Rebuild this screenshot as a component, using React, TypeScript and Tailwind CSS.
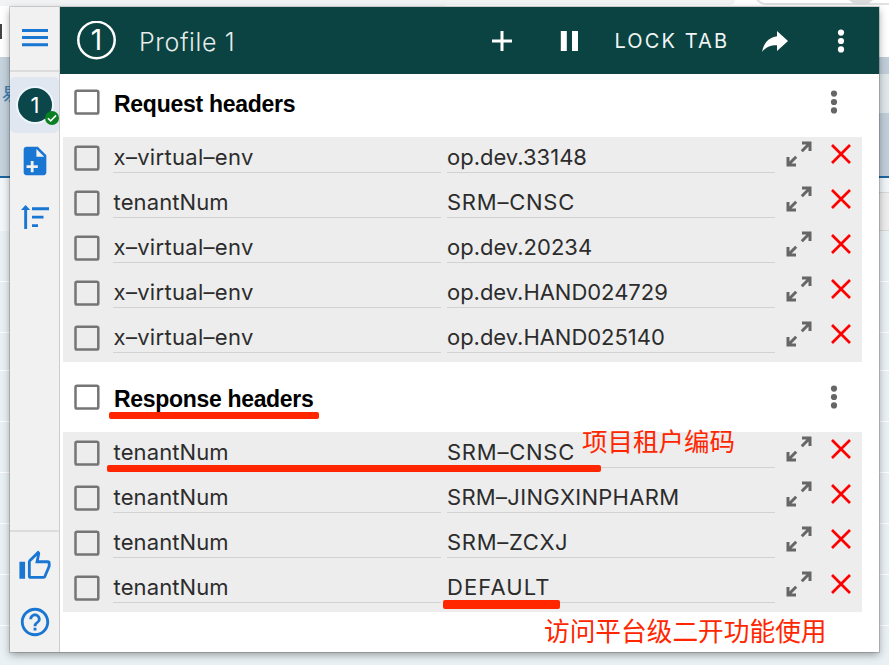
import React from "react";

type Entry = { name: string; value: string; nameCls: string; valueCls: string };

const X = { name: "x–virtual–env", nameCls: "tracking-[0.3px]" };
const T = { name: "tenantNum", nameCls: "tracking-[0.1px]" };

const requestHeaders: Entry[] = [
  { ...X, value: "op.dev.33148", valueCls: "tracking-[0px]" },
  { ...T, value: "SRM–CNSC", valueCls: "tracking-[0.75px]" },
  { ...X, value: "op.dev.20234", valueCls: "tracking-[0px]" },
  { ...X, value: "op.dev.HAND024729", valueCls: "tracking-[-0.03px]" },
  { ...X, value: "op.dev.HAND025140", valueCls: "tracking-[-0.03px]" },
];

const responseHeaders: Entry[] = [
  { ...T, value: "SRM–CNSC", valueCls: "tracking-[0.75px]" },
  { ...T, value: "SRM–JINGXINPHARM", valueCls: "tracking-[0.3px]" },
  { ...T, value: "SRM–ZCXJ", valueCls: "tracking-[0.7px]" },
  { ...T, value: "DEFAULT", valueCls: "tracking-[1.1px]" },
];

function Checkbox() {
  return (
    <svg viewBox="0 0 26 26" className="block size-[26px] shrink-0" fill="none" stroke="#757575" strokeWidth="2.5">
      <rect x="1.5" y="1.7" width="22.8" height="22.8" rx="1.6" />
    </svg>
  );
}

function Dots({ className }: { className: string }) {
  return (
    <svg viewBox="0 0 8 26" className={className} fill="currentColor">
      <circle cx="4" cy="4.6" r="3.1" />
      <circle cx="4" cy="13" r="3.1" />
      <circle cx="4" cy="21.4" r="3.1" />
    </svg>
  );
}

function ExpandIcon() {
  return (
    <svg viewBox="0 0 26 26" className="mt-[4px] ml-[11px] h-[26px] w-[26px] shrink-0" fill="none" stroke="#666" strokeWidth="3">
      <path d="M16 2h8v8M24 2l-8.2 8.2M2 16v8h8M2 24l8.2-8.2" />
    </svg>
  );
}

function Row({ entry }: { entry: Entry }) {
  return (
    <div className="flex h-[45px] items-start pl-[11px]">
      <div className="pt-[8px]"><Checkbox /></div>
      <div className={`ml-[13px] h-[36px] w-[328px] shrink-0 border-b border-[#d2d2d2] pl-[0.6px] text-[22px] leading-[40px] whitespace-nowrap text-[#2c2c2c] ${entry.nameCls}`}>{entry.name}</div>
      <div className={`ml-[6px] h-[36px] w-[328px] shrink-0 border-b border-[#d2d2d2] text-[22px] leading-[40px] whitespace-nowrap text-[#2c2c2c] ${entry.valueCls}`}>{entry.value}</div>
      <ExpandIcon />
      <svg viewBox="0 0 20 20" className="mt-[7px] ml-[19px] size-[20px] shrink-0" stroke="#f00" strokeWidth="2.7">
        <path d="M1 1l18 18M19 1L1 19" />
      </svg>
    </div>
  );
}

function Section({ title, entries, headClass, titleClass }: { title: string; entries: Entry[]; headClass: string; titleClass: string }) {
  return (
    <section>
      <div className={`flex items-end pr-[41px] pb-[22px] pl-[14px] ${headClass}`}>
        <Checkbox />
        <h2 className={`ml-[14px] h-[22px] flex-1 font-['Liberation_Sans',sans-serif] text-[23px] leading-[23px] font-bold text-black ${titleClass}`}>{title}</h2>
        <Dots className="h-[26px] w-[8px] text-[#666]" />
      </div>
      <div className="mr-[17px] ml-[3px] bg-[#ededed]">
        {entries.map((e, i) => <Row key={i} entry={e} />)}
      </div>
    </section>
  );
}

const stripes = ["h-[51px]", "h-[51px]", "h-[38px]", "h-[51px]", "h-[51px]", "h-[51px]", "h-[51px]", "h-[51px]"];

function Stripes() {
  return (
    <>
      {stripes.map((h, i) => <div key={i} className={`shrink-0 border-b border-white ${h}`} />)}
    </>
  );
}

function Backdrop() {
  return (
    <div className="absolute inset-0 flex justify-between overflow-hidden bg-[#eaf1f4]">
      <div className="flex w-[445px] flex-col">
        <div className="h-[6px] shrink-0 bg-[#f1f3f4]" />
        <div className="h-[51px] shrink-0 bg-white pt-[18px]"><div className="h-[15px] w-[2px] bg-[#444]" /></div>
        <div className="h-[119px] shrink-0 bg-[#c5d3de] pt-[26px] pl-[2px] font-['Noto_Sans_CJK_SC',sans-serif] text-[17px] leading-[19px] font-medium text-[#4384b5]">易</div>
        <div className="h-[2px] shrink-0 bg-[#1b66a0]" />
        <div className="h-[53px] shrink-0 bg-[#f3f7f9]" />
        <Stripes />
      </div>
      <div className="flex w-[444px] flex-col">
        <div className="relative h-[57px] shrink-0 bg-white">
          <div className="absolute top-0 left-0 h-[5px] w-[290px] rounded-br-[8px] bg-[#f1f3f4]" />
          <div className="absolute -top-[20px] left-[309px] h-[25px] w-[160px] rounded-bl-[12px] border-2 border-[#dfe1e3]" />
          <div className="absolute -top-[29px] left-[399px] size-[34px] rounded-full bg-[#dcdcdc]" />
        </div>
        <div className="h-[17px] shrink-0 bg-[#c1ced9]" />
        <div className="h-[39px] shrink-0 bg-[#dfe7eb]" />
        <div className="h-[63px] shrink-0 bg-[#c1ced9]" />
        <div className="h-[2px] shrink-0 bg-[#1b66a0]" />
        <div className="h-[14px] shrink-0 bg-[#f0f5f8]" />
        <div className="h-[39px] shrink-0 border-y border-[#d6d8d9] bg-[#ededed]" />
        <Stripes />
      </div>
    </div>
  );
}

function Sidebar() {
  return (
    <aside className="flex w-[50px] shrink-0 flex-col border-r border-[#ccc] bg-[#f1f1f1]">
      <div className="flex h-[65px] items-start justify-center border-b-2 border-[#dcdcdc] pt-[22px]">
        <svg viewBox="0 0 26 18" className="h-[18px] w-[26px]" fill="#1976d2"><path d="M0 0h26v3H0zM0 7.100h26v3H0zM0 14.300h26v3H0z" /></svg>
      </div>
      <div className="mt-[5px] flex h-[56px] items-center justify-center rounded-[5px] bg-[#e0e7f0]">
        <div className="relative ml-px flex size-[38px] items-center justify-center rounded-full border-2 border-[#eff5fb] bg-[#0b474a] text-[22px] leading-none text-white">
          1
          <svg viewBox="0 0 14 14" className="absolute top-[23px] left-[27px] size-[14px]">
            <circle cx="7" cy="7" r="7" fill="#0a8022" />
            <path d="M2.900 7.200l2.800 2.700 5.400-5.500" fill="none" stroke="#fff" strokeWidth="1.5" />
          </svg>
        </div>
      </div>
      <div className="flex flex-1 flex-col items-center pt-[11px] pl-px">
        <svg viewBox="0 0 24 24" className="size-[34px]" fill="#1976d2">
          <path d="M13 9h5.5L13 3.5V9M6 2h8l6 6v12a2 2 0 0 1-2 2H6a2 2 0 0 1-2-2V4c0-1.11.89-2 2-2m5 13v-3H9v3H6v2h3v3h2v-3h3v-2h-3z" />
        </svg>
        <svg viewBox="0 0 28 24" className="mt-[27px] h-[24px] w-[28px]" fill="#1976d2">
          <path d="M3.200 24V5H0l4.600-5 4.600 5H6.100v19zM11 2.300h17v2.900H11zM11 10.700h11.500v2.900H11zM11 19.200h6v2.900h-6z" />
        </svg>
      </div>
      <div className="flex h-[122px] flex-col items-center border-t-2 border-[#dcdcdc] pt-[16.5px] pl-px">
        <svg viewBox="0 0 24 24" className="size-[34px]" fill="#1976d2">
          <path d="M5 9v12H1V9h4m4 12a2 2 0 0 1-2-2V9c0-.55.22-1.05.59-1.41L14.17 1l1.06 1.06c.27.27.44.64.44 1.05l-.03.32L14.69 8H21a2 2 0 0 1 2 2v2c0 .26-.05.5-.14.73l-3.02 7.05C19.54 20.5 18.83 21 18 21H9m0-2h9.03L21 12v-2h-8.79l1.13-5.32L9 9.03V19z" />
        </svg>
        <svg viewBox="0 0 24 24" className="mt-[22px] size-[34px]" fill="#1976d2">
          <path d="M11 18h2v-2h-2v2zm1-16C6.48 2 2 6.48 2 12s4.48 10 10 10 10-4.48 10-10S17.52 2 12 2zm0 18c-4.41 0-8-3.59-8-8s3.59-8 8-8 8 3.59 8 8-3.59 8-8 8zm0-14c-2.21 0-4 1.79-4 4h2c0-1.1.9-2 2-2s2 .9 2 2c0 2-3 1.75-3 5h2c0-2.25 3-2.5 3-5 0-2.21-1.79-4-4-4z" />
        </svg>
      </div>
    </aside>
  );
}

function Header() {
  return (
    <header className="flex h-[67px] items-center bg-[#0a4341] text-white">
      <div className="relative ml-[17px] flex size-[39px] items-center justify-center text-[28px] leading-none">
        <svg viewBox="0 0 39 39" className="absolute inset-0 size-[39px]" fill="none" stroke="#fff" strokeWidth="2.5"><circle cx="19.5" cy="19" r="18.200" /></svg>
        <span className="-mt-px">1</span>
      </div>
      <span className="mt-[4px] ml-[23px] w-[353px] text-[25px] font-light tracking-[0.6px] text-[#e6eceb]">Profile 1</span>
      <svg viewBox="0 0 20 20" className="mt-px h-[20px] w-[20px]" stroke="#fff" strokeWidth="3"><path d="M10 0v20M0 10h20" /></svg>
      <svg viewBox="0 0 18 20" className="mt-px ml-[48px] h-[20px] w-[18px]" fill="#fff"><path d="M.800 0h6v20h-6zM12 0h6v20h-6z" /></svg>
      <span className="ml-[36.5px] w-[113px] text-[20px] tracking-[2.100px] whitespace-nowrap text-[#f0f4f4]">LOCK TAB</span>
      <svg viewBox="0 0 26 21" className="mt-px ml-[34px] h-[21px] w-[26px]" fill="#fff">
        <path d="M15 0l11 10-11 10v-5.800C8.500 14.200 3.600 16 0 21 1.500 13.500 5.500 6.500 15 5.300z" />
      </svg>
      <Dots className="ml-[49.5px] h-[26px] w-[8px]" />
    </header>
  );
}

export default function App() {
  return (
    <div className="relative h-[665px] w-[889px] overflow-hidden font-['Inter','Noto_Sans_CJK_SC',sans-serif]">
      <Backdrop />
      <div className="relative flex h-full pt-[7px] pb-[12px] pl-[10px]">
        <div className="flex h-[645px] w-[869px] bg-white shadow-[0_0_0_1px_rgba(0,0,0,0.16),0_3px_8px_rgba(0,0,0,0.35)]">
          <Sidebar />
          <main className="min-w-0 flex-1">
            <Header />
            <Section title="Request headers" entries={requestHeaders} headClass="h-[63px]" titleClass="tracking-[-0.27px]" />
            <Section title="Response headers" entries={responseHeaders} headClass="h-[70px]" titleClass="tracking-[-0.32px]" />
          </main>
        </div>
      </div>
      <div className="absolute top-[412px] left-[109px] h-[7px] w-[210px] rounded-[2px] bg-[#ff2600]" />
      <div className="absolute top-[465px] left-[107px] h-[7px] w-[494px] rounded-[2px] bg-[#ff2600]" />
      <div className="absolute top-[600px] left-[443px] h-[9px] w-[117px] rounded-[2px] bg-[#ff2600]" />
      <div className="absolute top-[422px] left-[582px] font-['Noto_Sans_CJK_SC',sans-serif] text-[25.5px] leading-[36px] whitespace-nowrap text-[#ff2600]">项目租户编码</div>
      <div className="absolute top-[612px] left-[544px] font-['Noto_Sans_CJK_SC',sans-serif] text-[25.7px] leading-[36px] whitespace-nowrap text-[#ff2600]">访问平台级二开功能使用</div>
    </div>
  );
}
